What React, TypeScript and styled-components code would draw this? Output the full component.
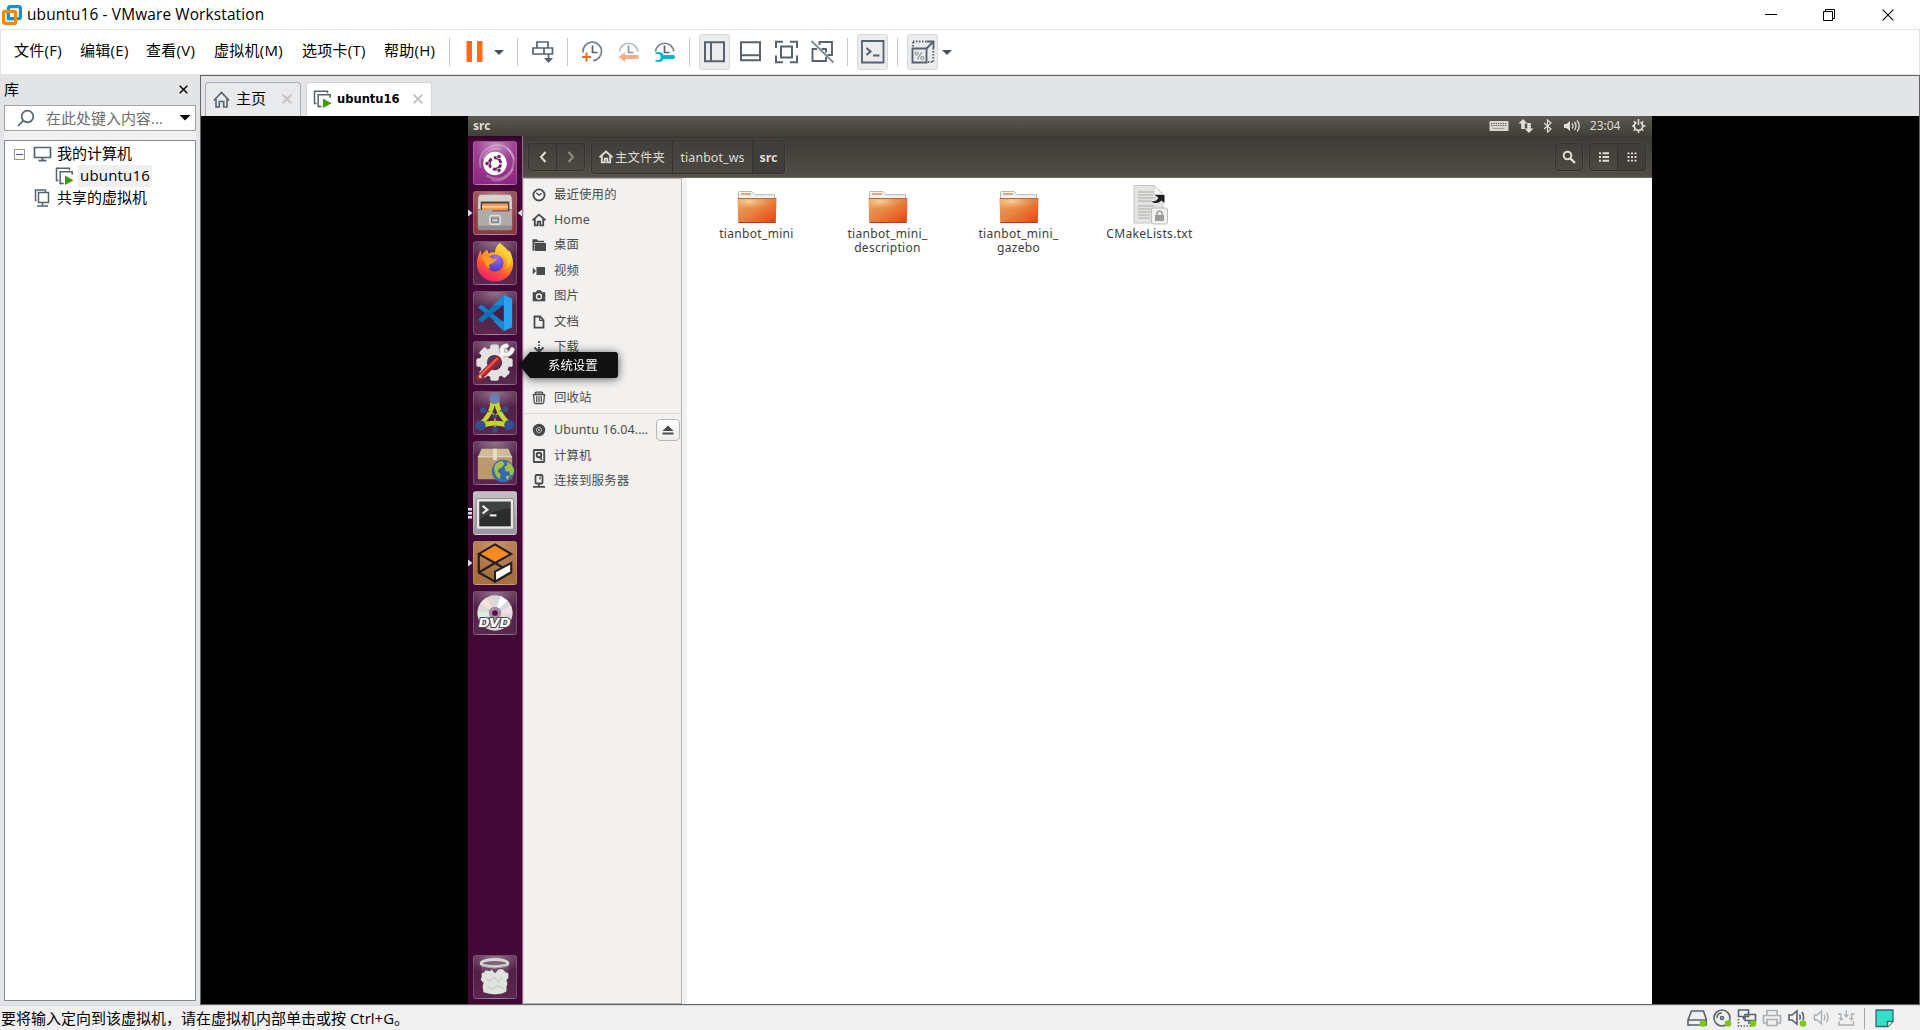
import React from 'react';
import styled, { createGlobalStyle } from 'styled-components';

const GlobalStyle = createGlobalStyle`
  * { box-sizing: border-box; }
  html, body { margin: 0; padding: 0; background: #fff; overflow: hidden; }
  svg { display: block; flex: none; }
`;

const hostFont = '"Open Sans", "Noto Sans CJK SC", sans-serif';
const guestFont = '"Noto Sans", "Noto Sans CJK SC", sans-serif';

/* ---------- host window ---------- */

const Window = styled.div`
  width: 1920px;
  height: 1030px;
  display: flex;
  flex-direction: column;
  background: #fff;
  color: #000;
  font: 15px/20px ${hostFont};
  white-space: nowrap;
`;

const TitleBar = styled.header`
  height: 29px;
  flex: none;
  display: flex;
  align-items: center;
  padding: 0 3px 0 2px;
`;

const Title = styled.h1`
  margin: 1px 0 0 5px;
  flex: 1;
  font-size: 15.4px;
  font-weight: 400;
  letter-spacing: 0.15px;
`;

const WindowButton = styled.div`
  width: 58.5px;
  height: 28px;
  display: flex;
  align-items: center;
  justify-content: center;
`;

const MenuBar = styled.nav`
  height: 46px;
  flex: none;
  display: flex;
  align-items: center;
  padding-left: 13px;
  border: 1px solid #e3e4e6;
`;

const MenuItem = styled.div<{ $w: number }>`
  width: ${p => p.$w}px;
  padding-bottom: 4px;
  letter-spacing: 0.28px;
`;

const Separator = styled.div<{ $ml?: number }>`
  width: 1px;
  height: 28px;
  margin-left: ${p => p.$ml ?? 0}px;
  background: #c6c7c9;
`;

const Tool = styled.div<{ $ml: number; $active?: boolean }>`
  margin-left: ${p => p.$ml}px;
  display: flex;
  align-items: center;
  justify-content: center;
  ${p => p.$active && `
    width: 31px;
    height: 36px;
    border: 1px solid #d6d8da;
    border-radius: 3px;
    background: #ebecee;
  `}
`;

const Body = styled.div`
  height: 930px;
  flex: none;
  display: flex;
  background: #e3e4e6;
`;

const Library = styled.aside`
  width: 200px;
  padding: 1px 4px 4px;
  display: flex;
  flex-direction: column;
`;

const LibraryHead = styled.div`
  height: 29px;
  display: flex;
  align-items: center;
  justify-content: space-between;
  padding: 0 8px 3px 0;
`;

const SearchBox = styled.div`
  height: 26px;
  display: flex;
  align-items: center;
  border: 1px solid #a0a2a5;
  background: #fff;
  color: #6d6d6d;
  padding: 0 4px 0 12px;
  span { flex: 1; margin-left: 11px; }
`;

const Strip = styled.div`
  height: 9px;
  background: #f0f0f0;
`;

const Tree = styled.div`
  flex: 1;
  border: 1px solid #848a92;
  background: #fff;
  padding-top: 2px;
`;

const TreeRow = styled.div<{ $indent: number }>`
  height: 22px;
  display: flex;
  align-items: center;
  padding-left: ${p => p.$indent}px;
`;

const Toggle = styled.div`
  width: 11px;
  height: 11px;
  border: 1px solid #969696;
  margin-right: 8px;
  display: flex;
  align-items: center;
  justify-content: center;
  &::after { content: ''; width: 7px; height: 1px; background: #3a5aa8; }
`;

const TreeLabel = styled.span<{ $selected?: boolean; $ml: number }>`
  margin-left: ${p => p.$ml}px;
  padding-bottom: 2px;
  line-height: 20px;
  ${p => p.$selected && 'background: #f0f0f0; padding: 0 2px 2px; letter-spacing: 0.2px;'}
`;

const Main = styled.main`
  flex: 1;
  display: flex;
  flex-direction: column;
  border: 1px solid #646466;
`;

const TabBar = styled.div`
  height: 40px;
  flex: none;
  display: flex;
  align-items: flex-end;
  gap: 5px;
  padding-left: 4px;
`;

const Tab = styled.div<{ $w: number; $active?: boolean }>`
  width: ${p => p.$w}px;
  height: 34px;
  display: flex;
  align-items: center;
  padding: 0 8px 1px 7px;
  border: 1px solid ${p => (p.$active ? '#d4d5d7' : '#aeb0b3')};
  border-bottom: 0;
  border-radius: 4px 4px 0 0;
  background: ${p => (p.$active ? '#fff' : '#e9eaeb')};
  ${p => p.$active && `
    padding: 0 8px 1px 6px;
    font: 700 12.8px/20px "DejaVu Sans Condensed", "DejaVu Sans", sans-serif;
    font-stretch: condensed;
  `}
  span { flex: 1; margin-left: ${p => (p.$active ? 5 : 6)}px; padding-bottom: ${p => (p.$active ? 0 : 2)}px; }
`;

const Screen = styled.div`
  flex: 1;
  display: flex;
  justify-content: center;
  background: #000;
`;

const StatusBar = styled.footer`
  flex: 1;
  display: flex;
  align-items: center;
  border-top: 1px solid #d9dadc;
  background: #f0f0f0;
  padding: 0 26px 0 1px;
`;

const StatusText = styled.span`
  flex: 1;
`;

const StatusIcons = styled.div`
  display: flex;
  align-items: center;
  gap: 5px;
`;

const StatusDivider = styled.div`
  width: 1px;
  height: 21px;
  background: #a4a6a8;
  margin: 0 5px 0 2px;
`;

/* ---------- guest desktop ---------- */

const Guest = styled.section`
  width: 1184px;
  height: 888px;
  display: flex;
  flex-direction: column;
  background: #fff;
  font: 12.4px/16px ${guestFont};
  color: #4c4c4c;
`;

const Panel = styled.div`
  height: 20px;
  flex: none;
  display: flex;
  align-items: center;
  justify-content: space-between;
  padding: 0 6px 0 5px;
  background: linear-gradient(#5b594f, #403f3a);
  color: #dfdbd2;
  b { font-size: 12px; }
`;

const Indicators = styled.div`
  display: flex;
  align-items: center;
  gap: 9.2px;
`;

const Clock = styled.span`
  width: 32px;
  font-size: 12px;
`;

const Desktop = styled.div`
  flex: 1;
  display: flex;
  min-height: 0;
`;

const Launcher = styled.div`
  width: 55px;
  display: flex;
  flex-direction: column;
  gap: 6px;
  padding: 5px 0;
  background: linear-gradient(#2c0624, #420836 5px);
  border-right: 1px solid #9a6b92;
`;

const LauncherRow = styled.div<{ $last?: boolean }>`
  height: 44px;
  display: flex;
  align-items: center;
  position: relative;
  ${p => p.$last && 'margin-top: auto;'}
`;

const Pips = styled.div`
  width: 5px;
  display: flex;
`;

const Tile = styled.div<{ $bg?: string }>`
  width: 44px;
  height: 44px;
  border-radius: 3px;
  border: 1px solid rgba(255, 255, 255, 0.17);
  background: ${p => p.$bg ?? 'radial-gradient(ellipse 34px 19px at 50% 0, rgba(255,255,255,.42), rgba(255,255,255,.04) 95%), linear-gradient(#45103a, #542049)'};
  display: flex;
  align-items: center;
  justify-content: center;
`;

const Tooltip = styled.div`
  position: absolute;
  left: 51px;
  top: 11px;
  z-index: 2;
  width: 99px;
  height: 26px;
  filter: drop-shadow(0 1px 5px rgba(0, 0, 0, 0.65));
`;

const TooltipBody = styled.div`
  height: 26px;
  padding-left: 29px;
  color: #fff;
  line-height: 28px;
  border-radius: 3px;
  background: #111;
  clip-path: polygon(0 50%, 11px 0, 100% 0, 100% 100%, 11px 100%);
`;

const Files = styled.div`
  flex: 1;
  display: flex;
  flex-direction: column;
`;

const HeaderBar = styled.div`
  height: 42px;
  flex: none;
  display: flex;
  align-items: center;
  padding: 1px 6px 0 5px;
  background: linear-gradient(#3b3a36, #504d46 39px, #55534b);
  border-bottom: 1px solid #6b6961;
  color: #dfdbd2;
`;

const ButtonGroup = styled.div<{ $h: number; $ml: number | string }>`
  display: flex;
  height: ${p => p.$h}px;
  margin-left: ${p => (typeof p.$ml === 'number' ? p.$ml + 'px' : p.$ml)};
  border: 1px solid #34332f;
  border-radius: 4px;
  background: linear-gradient(#403f3b, #4b4943);
  box-shadow: 0 0 0 1px rgba(255, 255, 255, 0.04);
  overflow: hidden;
`;

const HeaderButton = styled.div<{ $w: number; $on?: boolean }>`
  width: ${p => p.$w}px;
  display: flex;
  align-items: center;
  justify-content: center;
  gap: 2px;
  & + & { border-left: 1px solid #34332f; }
  ${p => p.$on && 'background: #3f3e3a;'}
`;

const PathLabel = styled.span<{ $bold?: boolean }>`
  padding-top: 1px;
  letter-spacing: 0.1px;
  font-weight: ${p => (p.$bold ? 700 : 400)};
`;

const FilesBody = styled.div`
  flex: 1;
  display: flex;
  background: #f2f1f0;
`;

const Places = styled.div`
  width: 159px;
  border: 1px solid #b4b3b1;
  border-left-color: #d8d0d6;
  padding-top: 3px;
`;

const Place = styled.div`
  height: 25.4px;
  display: flex;
  align-items: center;
  padding-left: 8px;
  gap: 8px;
`;

const PlaceName = styled.span`
  width: 98px;
  letter-spacing: 0.15px;
`;

const Rule = styled.hr`
  border: 0;
  height: 1px;
  margin: 2px 0 4px;
  background: #dcdbd9;
`;

const Eject = styled.div`
  width: 24px;
  height: 22px;
  margin-left: -4px;
  border: 1px solid #b8b6b3;
  border-radius: 4px;
  background: linear-gradient(#fff, #eceae8);
  display: flex;
  align-items: center;
  justify-content: center;
`;

const IconView = styled.div`
  flex: 1;
  margin-left: 5px;
  background: #fff;
  display: flex;
  padding: 7px 0 0 4px;
`;

const FileItem = styled.div`
  width: 131px;
  display: flex;
  flex-direction: column;
  align-items: center;
  text-align: center;
  line-height: 14.4px;
  font-size: 12px;
  color: #3c3c3c;
`;

const FileName = styled.div`
  white-space: pre;
  letter-spacing: 0.32px;
`;

/* ---------- icons ---------- */

const slate = '#56636f';

const Ico = ({ s = 24, h, children, ...rest }: any) => (
  <svg width={s} height={h ?? s} viewBox={`0 0 ${s} ${h ?? s}`} fill="none" stroke={slate} strokeWidth="2" {...rest}>{children}</svg>
);

const Logo = () => (
  <svg width="20" height="20" viewBox="0 0 20 20" fill="none" strokeWidth="3.2">
    <rect x="6.4" y="1.6" width="12" height="12" rx="1.500" stroke="#0f95cf" />
    <rect x="1.6" y="6.4" width="12" height="12" rx="1.500" stroke="#ee8b10" />
    <path d="M6.400 8.200V13.600H11" stroke="#0f95cf" />
  </svg>
);

const Caret = () => <Ico s={12} stroke="none"><path d="M1 4h10L6 9z" fill="#45525e" /></Ico>;

const ClockHands = ({ c = slate }: { c?: string }) => <path d="M12.500 5.500v7h5" stroke={c} strokeWidth="1.700" />;

const VmIcon = () => (
  <Ico s={19} strokeWidth="1.5">
    <path d="M3.5 13.5h-2V1.2h13v2" /><path d="M7 16.5H5.2V4.8h12v3" /><path d="M5.2 16.5h3.5" />
    <path d="M10 8.5l8.5 4.7L10 18z" fill="#3f9b12" stroke="none" />
  </Ico>
);

const Cross = ({ c = '#c3c4c6', s = 10, w = 2 }: any) => (
  <Ico s={s} stroke={c} strokeWidth={w}><path d={`M.7.7L${s - .7} ${s - .7}M${s - .7}.7L.7 ${s - .7}`} /></Ico>
);

const Dot = () => <circle cx="16" cy="15.500" r="3.300" fill="#7ac70c" stroke="none" />;

const dark = '#4a4a4a';
const P = ({ children }: any) => (
  <svg width="14" height="14" viewBox="0 0 14 14" fill="none" stroke={dark} strokeWidth="1.800">{children}</svg>
);

const HousePath = () => <><path d="M.5 7.300L7 1.600 13.500 7.300" /><path d="M2.800 6v6.400h2.900V8.600h2.600v3.800h2.900V6" /></>;

const places = [
  { name: '最近使用的', icon: <P><circle cx="7" cy="7" r="5.600" /><path d="M4.300 4.700L7 7.200l2.600-2" strokeWidth="1.200" /></P> },
  { name: 'Home', icon: <P><HousePath /></P> },
  { name: '桌面', icon: <P><path d="M.5 1.2h4.5l1 1.5h6v1.5H2.5v8.5h-2z" fill={dark} stroke="none" /><path d="M3 5h11v8H3z" fill={dark} stroke="none" /></P> },
  { name: '视频', icon: <P><path d="M4.5 3H13v8H4.500zM.800 3.500L4 7 .800 10.500z" fill={dark} stroke="none" /></P> },
  { name: '图片', icon: <P><path d="M1 3.500h3L5.200 1.500h3.600L10 3.500h3V12H1z" fill={dark} stroke={dark} strokeWidth=".6" /><circle cx="7" cy="7.500" r="2.500" stroke="#f2f1f0" strokeWidth="1.300" /></P> },
  { name: '文档', icon: <P><path d="M2.500 1.500h5.500l3.500 3.500v7.700h-9z" /><path d="M7.700 1.500v4h4" strokeWidth="1.200" /></P> },
  { name: '下载', icon: <P><path d="M7 1v2M7 4.500v1.500M7 7v5" /><path d="M2.500 7.500L7 12l4.500-4.500" /></P> },
  { name: '音乐', icon: <P><path d="M4.500 11V2.500h7V10" /><circle cx="3.200" cy="11" r="1.200" /><circle cx="10.200" cy="10" r="1.200" /></P> },
  { name: '回收站', icon: <P><rect x="3.200" y="1.200" width="7.600" height="2" rx="1" strokeWidth="1.200" /><path d="M.700 3.700h12.600M1.600 4l.6 7q.2 1.500 1.500 1.500h6.600q1.300 0 1.500-1.500l.6-7" strokeWidth="1.300" /><path d="M4.700 5v6M7 5v6M9.300 5v6" strokeWidth="1.200" /></P> },
];

const devices = [
  { name: 'Ubuntu 16.04.…', eject: true, icon: <P><circle cx="7" cy="7" r="6.200" fill={dark} stroke="none" /><circle cx="7" cy="7" r="2.600" stroke="#c0bfbe" strokeWidth=".9" /><circle cx="7" cy="7" r=".9" fill="#d0cfce" stroke="none" /></P> },
  { name: '计算机', icon: <P><rect x="1.800" y="1" width="10.400" height="12" rx=".5" /><circle cx="7" cy="6" r="2.300" strokeWidth="2" /><path d="M7.500 7.500l2.500 3.500" /></P> },
  { name: '连接到服务器', icon: <P><rect x="3.500" y="1" width="7" height="8.500" rx="1" /><path d="M7 9v3.500M1 12.800h12" /><path d="M8 2.500v3" strokeWidth="1.200" /></P> },
];

const Folder = () => (
  <svg width="40" height="42" viewBox="0 0 40 42">
    <defs>
      <linearGradient id="fold" x1="0" y1="0" x2="1" y2="1"><stop offset="0" stopColor="#eba764" /><stop offset=".5" stopColor="#e5813f" /><stop offset=".8" stopColor="#ec5a20" /><stop offset="1" stopColor="#c9421a" /></linearGradient>
      <radialGradient id="glow" cx=".3" cy=".25" r=".6"><stop offset="0" stopColor="#f8d9a0" stopOpacity=".9" /><stop offset="1" stopColor="#f0a060" stopOpacity="0" /></radialGradient>
    </defs>
    <path d="M1.500 15V7.500q0-1 1-1H15l3 3.200h19.500V16z" fill="#f3f2f1" stroke="#b7b5b2" />
    <path d="M4 9h10" stroke="#ee9a6c" strokeWidth="1.800" />
    <path d="M.500 13h39l-.7 24q0 1-1 1H2.200q-1 0-1-1z" fill="url(#fold)" />
    <path d="M.500 13h39l-.4 9Q22 22 1 27z" fill="url(#glow)" />
    <path d="M1 13.500h38" stroke="#b96a3c" /><path d="M1.500 37.500h37" stroke="#b93c18" />
  </svg>
);

const TextFile = () => (
  <svg width="40" height="42" viewBox="1 0 40 42">
    <path d="M5 .500h20l9 9V38H5z" fill="#e3e3e2" stroke="#c6c6c5" />
    <path d="M25 .500V9.500h9z" fill="#fafafa" stroke="#c6c6c5" />
    <path d="M9 7h15M9 10h15M9 13h17M9 16h13M9 21h16M9 24h14M9 27h13M9 30h12M9 33h12" stroke="#a9a9a8" strokeWidth="1" />
    <path d="M26 10h9.500v8l-3-2.500Q28 20 22 16.500q5 .5 7.500-3.500z" fill="#1e1e1e" />
    <rect x="22.500" y="23" width="16" height="16" rx="2" fill="#f1f1f0" stroke="#bcbcba" />
    <rect x="26" y="30" width="9" height="6" fill="#9b9b99" /><path d="M28 30v-2.500q2.500-3 5 0V30" fill="none" stroke="#9b9b99" strokeWidth="1.500" />
  </svg>
);

const Art = styled.svg.attrs({ width: 42, height: 42, viewBox: '0 0 44 44' })`
  overflow: visible;
`;

const gearTeeth = [0, 45, 90, 135];

const apps: { bg?: string; art: React.ReactNode; pips?: 'one' | 'three'; focus?: boolean; tip?: string }[] = [
  {
    bg: 'radial-gradient(circle at 50% 5%, #c58bbd, #9b4190 45%, #8c2280)',
    art: <Art>
      <g fill="none" stroke="#fff" strokeOpacity=".28" strokeWidth="2"><path d="M7 27Q3 10 20 4Q35 0 42 18" /><path d="M13 35Q28 44 39 30Q46 15 34 6" /><path d="M18 40Q33 43 41 28" /><path d="M9 18Q14 5 28 7" /></g>
      <circle cx="22" cy="22.500" r="12.300" fill="#fff" />
      <circle cx="22" cy="22.500" r="6" fill="none" stroke="#702063" strokeWidth="3" strokeDasharray="10.200 2.360" strokeDashoffset="-1.200" />
      {[60, 180, 300].map(a => <circle key={a} cx={22 + 8.300 * Math.cos(a * Math.PI / 180)} cy={22.500 + 8.300 * Math.sin(a * Math.PI / 180)} r="2.300" fill="#702063" stroke="#fff" strokeWidth=".8" />)}
    </Art>,
  },
  {
    bg: 'radial-gradient(circle at 50% 5%, #b37b80, #8b3a44 70%)', pips: 'one', focus: true,
    art: <Art>
      <path d="M7 3h30q2 0 2.500 3L40 18H4L4.500 6Q5 3 7 3z" fill="#d5d4d2" />
      <rect x="7" y="10" width="30" height="9" fill="#4c3f38" /><rect x="8.500" y="12" width="27" height="7" fill="#ef9a56" /><path d="M8.500 15.500h27" stroke="#fbd8a8" strokeWidth="1.600" />
      <path d="M4 18.500h14l2 2h16l4-2.500V37q0 2-2 2.500H6Q4 39 4 37z" fill="#adacab" /><path d="M4 35h36v3q0 2-2 2H6q-2 0-2-2z" fill="#8f8e8d" />
      <rect x="16.500" y="24.500" width="11" height="9.500" rx="2" fill="#b9b8b7" stroke="#dedddc" strokeWidth="1.500" /><rect x="18.500" y="27.500" width="7" height="4" fill="#c9c8c7" stroke="#6b6a69" />
    </Art>,
  },
  {
    art: <Art>
      <defs><linearGradient id="ff" x1=".8" y1="0" x2=".3" y2="1"><stop offset="0" stopColor="#fff04a" /><stop offset=".35" stopColor="#ffb01f" /><stop offset=".65" stopColor="#ff5a2c" /><stop offset="1" stopColor="#f0187a" /></linearGradient><radialGradient id="ffg" cx=".6" cy=".2" r=".8"><stop offset="0" stopColor="#a46cf5" /><stop offset="1" stopColor="#4a39c0" /></radialGradient></defs>
      <path d="M27 1q7 5 8 10l2-2q4 6 4 14a19 18.500 0 0 1-38 0Q3 15 7 9l1 5q2-4 6-6l1 4q4-2 7-1Q22 5 27 1z" fill="url(#ff)" />
      <circle cx="22" cy="22" r="9" fill="url(#ffg)" />
      <path d="M8 16q6-2 9 0 3 3 7 1-2 5-7 6-3 2 1 5-6-1-7-7z" fill="#ff9a22" /><path d="M27 2q1 9 6 13 5 7-1 14 8-5 7-14-1-5-6-9z" fill="#ffd23c" fillOpacity=".8" />
    </Art>,
  },
  {
    art: <Art>
      <path d="M4 16l4-3 24 19v7z" fill="#0c7fc6" /><path d="M4 29l4 3L32 13V3z" fill="#1270b4" /><path d="M31 3l9 4v30l-9 4z" fill="#27a3f2" /><path d="M31 3L20 14l11 0zM20 30l11 11V31z" fill="#1c86cf" /><path d="M31 14v17L19.500 22.500z" fill="#4d1a42" />
    </Art>,
  },
  {
    tip: '系统设置',
    art: <Art>
      <g fill="#e2e2e1">{gearTeeth.map(a => <rect key={a} x="17" y="2.500" width="9" height="38" rx="2" transform={`rotate(${a} 21.500 21.500)`} />)}<circle cx="21.500" cy="21.500" r="15.500" /></g>
      <circle cx="21.500" cy="21.500" r="8" fill="#5b3151" />
      <path d="M34 4Q27.500 5 30 12Q37 15.500 40 8" fill="none" stroke="#9c9a9a" strokeWidth="5.500" strokeLinecap="round" />
      <path d="M34 4Q27.500 5 30 12Q37 15.500 40 8M30 12l-5 6" fill="none" stroke="#f4f4f3" strokeWidth="4.200" strokeLinecap="round" />
      <path d="M6 37L25 18" stroke="#a82626" strokeWidth="6.500" strokeLinecap="round" /><path d="M6 35.500L24 17.500" stroke="#e0605a" strokeWidth="2.300" strokeLinecap="round" /><circle cx="6.500" cy="36.500" r="1.300" fill="#fff" fillOpacity=".8" />
    </Art>,
  },
  {
    art: <Art>
      <path fillRule="evenodd" d="M17.500 8Q17 22 5 32l3 6q14-6 28 0l3-6Q27 22 26 8zM21.700 13.500Q20 23 12.500 31q9-2 18.500 0-7.500-8-9.300-17.500z" fill="#c4d52b" />
      <path d="M17 20l5 5 5.500-5M22 25v14" stroke="#b8c82a" strokeWidth="1.500" fill="none" /><path d="M9 19l7 1.500M33 18l-6 2" stroke="#344f8e" strokeWidth="1.300" />
      <g fill="#344f8e"><circle cx="21.500" cy="7" r="5.600" fill="#6a7fae" /><circle cx="6.800" cy="35" r="5.400" /><circle cx="37" cy="34.500" r="5.400" /><circle cx="9.500" cy="19" r="3.100" /><circle cx="33" cy="18" r="3" /><circle cx="22" cy="39.500" r="3" /><circle cx="22" cy="25.500" r="2.300" /></g>
    </Art>,
  },
  {
    art: <Art>
      <path d="M4 16l4-9h28l4 9z" fill="#d0bb98" /><rect x="4" y="16" width="36" height="23" rx="1" fill="#b99a6c" /><path d="M4 15.500h36" stroke="#e2cfae" strokeWidth="1.500" /><rect x="20" y="7" width="4" height="12" fill="#e9dcc4" />
      <circle cx="30.500" cy="30.500" r="11.800" fill="#3669ad" /><path d="M21 26q3-6 9-6l2 3-3 4-3 1-1 3 3 3-1 5q-6-3-6-13zM34 21l5 2 3 6-1 5-3 1-1-4-4 0-1-5 3-2zM33 36l5-1-3 5z" fill="#a2be4b" />
    </Art>,
  },
  {
    bg: 'linear-gradient(#c5bfc5, #9c949c)', pips: 'three',
    art: <Art>
      <rect x="2.500" y="7" width="39" height="32" rx="1.500" fill="#e9e9e8" stroke="#8b8a8a" /><rect x="5.500" y="10" width="33" height="26" fill="#2b2d2c" /><path d="M5.500 10h33v7Q22 18 5.500 29z" fill="#fff" fillOpacity=".1" />
      <path d="M9 14.500l5 4-5 4" fill="none" stroke="#eee" strokeWidth="2.200" /><path d="M16.500 24.500h7" stroke="#eee" strokeWidth="2.200" />
    </Art>,
  },
  {
    bg: 'radial-gradient(circle at 50% 0, #c79670, #a86f3f 70%)', pips: 'one',
    art: <Art>
      <path d="M22 2.500l17 10L22 22 5 12.500z" fill="#f58a20" stroke="#231f20" strokeWidth="2.200" /><path d="M5 12.500V32l17 9.500 17-9.500M5 32l17-10M22 22l17 10" fill="none" stroke="#231f20" strokeWidth="2.300" strokeLinejoin="round" />
      <path d="M22 31l17-9v9.500L22 41.500z" fill="#fff" stroke="#231f20" strokeWidth="2.200" />
    </Art>,
  },
  {
    art: <Art>
      <circle cx="22" cy="22" r="18.500" fill="#dad8d9" /><path d="M22 22L7 12 13 6z" fill="#f7e3d3" /><path d="M22 22L28 4l7 5z" fill="#fff" /><path d="M22 22l17-7 1 8z" fill="#efdfeb" /><path d="M22 22L4 20l1 8z" fill="#d9efdf" />
      <circle cx="22" cy="22" r="6.500" fill="#a98ba6" /><circle cx="22" cy="22" r="3" fill="#531047" />
      <text x="21.500" y="37" textAnchor="middle" textLength="33" lengthAdjust="spacingAndGlyphs" fontFamily="Inter, sans-serif" fontWeight="800" fontStyle="italic" fontSize="12.500" fill="#fff" stroke="#4d4a4d" strokeWidth="2" paintOrder="stroke">DVD</text>
    </Art>,
  },
];

const TrashArt = () => (
  <Art>
    <path d="M7 8l3 30q12 5 24 0l3-30z" fill="#fff" fillOpacity=".1" />
    <path d="M8 18l3-1 1-2 5 1 1-2 4 4 4-4 4 0 3 3 3 1v5l-2 2 1 4-1 3v5l-4 2q-8 2-16 0l-4-1-1-6 1-4-3-3 1-3z" fill="#dfe2dd" />
    <path d="M13 24l4 2 4-4 4 5 5-4M14 32l5 3 5-4 7 3" stroke="#bcc1ba" fill="none" />
    <ellipse cx="21.500" cy="7.500" rx="14" ry="3.800" fill="#8b8f8a" fillOpacity=".3" stroke="#d3d6d1" strokeWidth="3" />
    <path d="M9 10q12 5 25 0" stroke="#9a9e99" fill="none" />
  </Art>
);

const PipMarks = ({ kind }: { kind?: string }) => (
  <svg width="5" height="12" viewBox="0 0 5 12" fill="#e0dbe0">
    {kind === 'one' && <path d="M0 2.500L4.500 6 0 9.500z" />}
    {kind === 'three' && <path d="M0 1h4v2.500H0zM0 5h4v2.500H0zM0 9h4v2.500H0z" />}
  </svg>
);

const files = [
  { name: 'tianbot_mini', icon: <Folder /> },
  { name: 'tianbot_mini_\ndescription', icon: <Folder /> },
  { name: 'tianbot_mini_\ngazebo', icon: <Folder /> },
  { name: 'CMakeLists.txt', icon: <TextFile /> },
];

const menus: [string, number][] = [['文件(F)', 66], ['编辑(E)', 66], ['查看(V)', 68], ['虚拟机(M)', 88], ['选项卡(T)', 82], ['帮助(H)', 65]];

function Toolbar() {
  return (
    <>
      <Separator />
      <Tool $ml={12}><Ico stroke="none"><path d="M4.500 1h5.500v21H4.500zM15 1h5.500v21H15z" fill="#ff6a1c" /></Ico></Tool>
      <Tool $ml={7}><Caret /></Tool>
      <Separator $ml={12} />
      <Tool $ml={13}><Ico strokeWidth="1.700"><path d="M6 7.500V2h11v5.500M2 8h19.500v6H2zM13 8v6M17.500 14v5" /><path d="M13 18h9L17.500 23z" fill={slate} stroke="none" /></Ico></Tool>
      <Separator $ml={12} />
      <Tool $ml={12}><Ico strokeWidth="1.700"><path d="M3 12.500A9.300 9.300 0 1 1 13 20.700" stroke="#75818b" /><ClockHands /><path d="M6.500 12.500v9M2 17h9" stroke="#f0651f" strokeWidth="1.900" /></Ico></Tool>
      <Tool $ml={12}><Ico strokeWidth="1.700"><path d="M3.500 11.500A9.200 9.200 0 0 1 21.800 11.500" stroke="#b3bac0" /><ClockHands c="#8d969f" /><path d="M2.500 17L9 12v3h13.500v4H9v3z" fill="#ffad87" stroke="none" /></Ico></Tool>
      <Tool $ml={12}><Ico strokeWidth="1.700"><path d="M3.500 11.500A9.200 9.200 0 0 1 21.800 11.500" stroke="#75818b" /><ClockHands /><path d="M3.500 12.500Q10 11 11.500 15h9.500q2 0 2 2t-2 2h-9.500Q10 23 3.500 21.500v-1.500h3.500l1.500-1.500v-3L7 14H3.500z" fill="#08b2d6" stroke="none" /></Ico></Tool>
      <Separator $ml={13} />
      <Tool $ml={9} $active><Ico><path d="M2 2.200h19v19H2zM8 2v19" /></Ico></Tool>
      <Tool $ml={8}><Ico><path d="M3 2.200h19v18H3zM3 15.200h19" /></Ico></Tool>
      <Tool $ml={12}><Ico><path d="M2 8V1.800h7M16 1.800h7V8M23 15.500v6.800h-7M9 22.300H2v-6.800M7 6.500h11v11H7z" /></Ico></Tool>
      <Tool $ml={12}><Ico strokeWidth="1.900"><path d="M9.500 5V2H22v13h-4.500M7 9H2.500v12H16v-4M11.500 9H16v3.500" /><path d="M1.500 1l22 21.500" stroke="#7e8993" /></Ico></Tool>
      <Separator $ml={13} />
      <Tool $ml={9} $active><Ico><path d="M1 1h21.500v21.500H1z" strokeWidth="1.800" /><path d="M5.500 8l4 3.500-4 3.500" /><path d="M12 15.500h6.500" /></Ico></Tool>
      <Separator $ml={9} />
      <Tool $ml={9} $active>
        <Ico strokeWidth="1.900"><path d="M1.500 8.500h14v14h-14z" /><path d="M2 1.500h14M22.300 8v14H16M2 2v5" strokeDasharray="1.500 1.500" /><path d="M15 9l7-7M16 1.500h6.500V8" /><path d="M11 12l-5 7.500" strokeWidth="1.200" stroke="#8a949d" /><g strokeWidth="1.100" stroke="#8a949d"><circle cx="5.800" cy="13.500" r="1.500" /><circle cx="11.200" cy="18" r="1.500" /></g></Ico>
      </Tool>
      <Tool $ml={3}><Caret /></Tool>
    </>
  );
}

function GuestDesktop() {
  return (
    <Guest>
      <Panel>
        <b>src</b>
        <Indicators>
          <svg width="20" height="12" viewBox="0 0 20 12"><rect x=".500" y="1" width="19" height="10" rx="1" fill="#dcd8cf" /><path d="M2 3.500h16M2 5.500h16" stroke="#6c6a62" strokeDasharray="1.500 .8" strokeWidth="1.200" /><path d="M4 8.500h11" stroke="#aaa79e" strokeWidth="1.200" /></svg>
          <svg width="16" height="14" viewBox="0 0 16 14" fill="#e2ded5"><path d="M5 0l4.500 4.500H6.800V10H3.200V4.500H.500zM11 14l-4.500-4.500h2.700V4h3.600v5.500h2.700z" /></svg>
          <svg width="10" height="14" viewBox="0 0 10 14" fill="none" stroke="#e2ded5" strokeWidth="1.200"><path d="M1 4l7 6-3.500 3V1L8 4 1 10" /></svg>
          <svg width="18" height="14" viewBox="0 0 18 14" fill="none" stroke="#e2ded5" strokeWidth="1.300"><path d="M1 5h2.500L7 2v10L3.500 9H1z" fill="#e2ded5" stroke="none" /><path d="M9 4.500q2 2.500 0 5M11.500 3q3 4 0 8M14 1.500q4.500 5.500 0 11" /></svg>
          <Clock>23:04</Clock>
          <svg width="15" height="14" viewBox="0 0 15 14" fill="none" stroke="#e2ded5"><path d="M5.500 3.200a4.300 4.300 0 1 0 4 0" strokeWidth="1.800" /><path d="M7.500 0v6M1 7H3M12 7h2.500M2.800 2.300l1.500 1.500M12.200 2.300l-1.500 1.500M2.800 11.700l1.500-1.500M12.200 11.700l-1.500-1.500M7.500 11.500V14" strokeWidth="1.500" /></svg>
        </Indicators>
      </Panel>
      <Desktop>
        <Launcher>
          {apps.map((a, i) => (
            <LauncherRow key={i}>
              <Pips><PipMarks kind={a.pips} /></Pips>
              <Tile $bg={a.bg}>{a.art}</Tile>
              {a.focus && <svg width="5" height="12" viewBox="0 0 5 12"><path d="M5 2.500L.8 6 5 9.500z" fill="#e0dbe0" /></svg>}
              {a.tip && <Tooltip><TooltipBody>{a.tip}</TooltipBody></Tooltip>}
            </LauncherRow>
          ))}
          <LauncherRow $last><Pips /><Tile><TrashArt /></Tile></LauncherRow>
        </Launcher>
        <Files>
          <HeaderBar>
            <ButtonGroup $h={28} $ml={0}>
              <HeaderButton $w={27}><Ico s={10} h={12} stroke="#dfdbd2"><path d="M7.500 1L3 6l4.500 5" /></Ico></HeaderButton>
              <HeaderButton $w={28}><Ico s={10} h={12} stroke="#8f8c85"><path d="M2.500 1L7 6l-4.500 5" /></Ico></HeaderButton>
            </ButtonGroup>
            <ButtonGroup $h={34} $ml={6}>
              <HeaderButton $w={80}><Ico s={14} stroke="#dfdbd2" strokeWidth="1.900"><HousePath /></Ico><PathLabel>主文件夹</PathLabel></HeaderButton>
              <HeaderButton $w={80}><PathLabel>tianbot_ws</PathLabel></HeaderButton>
              <HeaderButton $w={32} $on><PathLabel $bold>src</PathLabel></HeaderButton>
            </ButtonGroup>
            <ButtonGroup $h={28} $ml="auto">
              <HeaderButton $w={26}><Ico s={14} stroke="#dfdbd2"><circle cx="5.500" cy="5.500" r="3.800" /><path d="M8.300 8.300l4.700 4.700" strokeWidth="2.400" /></Ico></HeaderButton>
            </ButtonGroup>
            <ButtonGroup $h={28} $ml={6}>
              <HeaderButton $w={27}><Ico s={10} stroke="#dfdbd2"><path d="M0 1.300h2M0 5h2M0 8.700h2M3.500 1.300H10M3.500 5H10M3.500 8.700H10" /></Ico></HeaderButton>
              <HeaderButton $w={28} $on><Ico s={10} stroke="#dfdbd2" strokeWidth="1.800"><path d="M.500 1.300h2M4 1.300h2M7.500 1.300h2M.500 5h2M4 5h2M7.500 5h2M.500 8.700h2M4 8.700h2M7.500 8.700h2" /></Ico></HeaderButton>
            </ButtonGroup>
          </HeaderBar>
          <FilesBody>
            <Places>
              {places.map(p => <Place key={p.name}>{p.icon}{p.name !== '音乐' && <PlaceName>{p.name}</PlaceName>}</Place>)}
              <Rule />
              {devices.map(d => (
                <Place key={d.name}>{d.icon}<PlaceName>{d.name}</PlaceName>
                  {d.eject && <Eject><Ico s={12} stroke="none" fill={dark}><path d="M6 1.500l5.500 5.500H.5zM.500 8.500h11v2H.5z" /></Ico></Eject>}
                </Place>
              ))}
            </Places>
            <IconView>
              {files.map(f => <FileItem key={f.name}>{f.icon}<FileName>{f.name}</FileName></FileItem>)}
            </IconView>
          </FilesBody>
        </Files>
      </Desktop>
    </Guest>
  );
}

const faint = '#a9b0b6';

export default function App() {
  return (
    <Window>
      <GlobalStyle />
      <TitleBar>
        <Logo />
        <Title>ubuntu16 - VMware Workstation</Title>
        <WindowButton><Ico s={12} stroke="#000" strokeWidth="1"><path d="M0 5.500h12" /></Ico></WindowButton>
        <WindowButton><Ico s={12} stroke="#000" strokeWidth="1"><path d="M.500 2.500h9v9h-9zM2.500 2.500v-2h9v9h-2" /></Ico></WindowButton>
        <WindowButton><Cross s={12} c="#000" w={1.1} /></WindowButton>
      </TitleBar>
      <MenuBar>
        {menus.map(([label, w]) => <MenuItem key={label} $w={w}>{label}</MenuItem>)}
        <Toolbar />
      </MenuBar>
      <Body>
        <Library>
          <LibraryHead>库<Cross s={9} c="#000" w={1.4} /></LibraryHead>
          <SearchBox>
            <Ico s={18} strokeWidth="1.700"><circle cx="10.500" cy="7.500" r="5.800" /><path d="M6.300 11.700L1 17" /></Ico>
            <span>在此处键入内容...</span>
            <Ico s={12} stroke="none"><path d="M.500 3h11L6 8.500z" fill="#000" /></Ico>
          </SearchBox>
          <Strip />
          <Tree>
            <TreeRow $indent={9}>
              <Toggle />
              <Ico s={19} h={16} strokeWidth="1.700"><path d="M1.500 1.500h16v10h-16zM9.500 11.500v3M5.500 14.700h8" /></Ico>
              <TreeLabel $ml={5}>我的计算机</TreeLabel>
            </TreeRow>
            <TreeRow $indent={50}><VmIcon /><TreeLabel $ml={4} $selected>ubuntu16</TreeLabel></TreeRow>
            <TreeRow $indent={28}>
              <Ico s={18} strokeWidth="1.500"><path d="M3.500 11.500h-1V1h10v2M5.500 3.500h10v10h-10zM9.500 13.500v3M4 17h11" /></Ico>
              <TreeLabel $ml={6}>共享的虚拟机</TreeLabel>
            </TreeRow>
          </Tree>
        </Library>
        <Main>
          <TabBar>
            <Tab $w={96}>
              <Ico s={17} strokeWidth="1.600"><path d="M.800 9.500L8.500 1.500l7.700 8M3 8v8h3.300v-5.500h4.400V16H14V8" /></Ico>
              <span>主页</span><Cross />
            </Tab>
            <Tab $w={126} $active><VmIcon /><span>ubuntu16</span><Cross /></Tab>
          </TabBar>
          <Screen><GuestDesktop /></Screen>
        </Main>
      </Body>
      <StatusBar>
        <StatusText>要将输入定向到该虚拟机，请在虚拟机内部单击或按 Ctrl+G。</StatusText>
        <StatusIcons>
          <Ico s={20} strokeWidth="1.600"><path d="M4.500 3h12l3 9v5H1v-5zM1 12h18" /><Dot /></Ico>
          <Ico s={20} strokeWidth="1.600"><circle cx="10" cy="10" r="8" /><circle cx="10" cy="10" r="1.500" /><path d="M5 10q0-5 5-5" /><Dot /></Ico>
          <Ico s={20} strokeWidth="1.600"><path d="M1.500 8.500V2h10v6.500zM8 6.500h10.500v6H8z" fill="#f0f0f0" /><path d="M6.500 8.500v3M12 12.500V16" /><path d="M1.500 11v7H14" strokeDasharray="1.500 1.500" /><Dot /></Ico>
          <Ico s={20} strokeWidth="1.600" stroke={faint}><path d="M5 7V2.500h10V7M5 15H1.500V7.500h17V15H15M5 11.500h10v6H5z" /></Ico>
          <Ico s={20} strokeWidth="1.600"><path d="M2 7h3l5-4v13l-5-4H2zM12.500 6.500q1.500 3 0 5M15 4q2.500 4 1 8" /><Dot /></Ico>
          <Ico s={20} strokeWidth="1.400" stroke={faint}><path d="M2.500 7h2.500l4.500-4v13L5 12H2.500zM12 6.500q1.500 3 0 6M14.500 4.500q3 5 0 10" /></Ico>
          <Ico s={20} strokeWidth="1.400" stroke={faint}><path d="M2 13v4h14.500v-4M9.300 2v6M1 6h3v5M17.500 6h-3v5" /><path d="M6.500 6.500h5.600L9.300 10zM1.500 10h5L4 13zM12 10h5l-2.500 3z" fill={faint} stroke="none" /></Ico>
          <StatusDivider />
          <Ico s={19} strokeWidth="1.300" stroke="#3d6470"><path d="M1 1h17v11.500l-5 5H1z" fill="#33dfc9" /><path d="M18 12.500h-5.500v5" fill="#e8fffb" /></Ico>
        </StatusIcons>
      </StatusBar>
    </Window>
  );
}
